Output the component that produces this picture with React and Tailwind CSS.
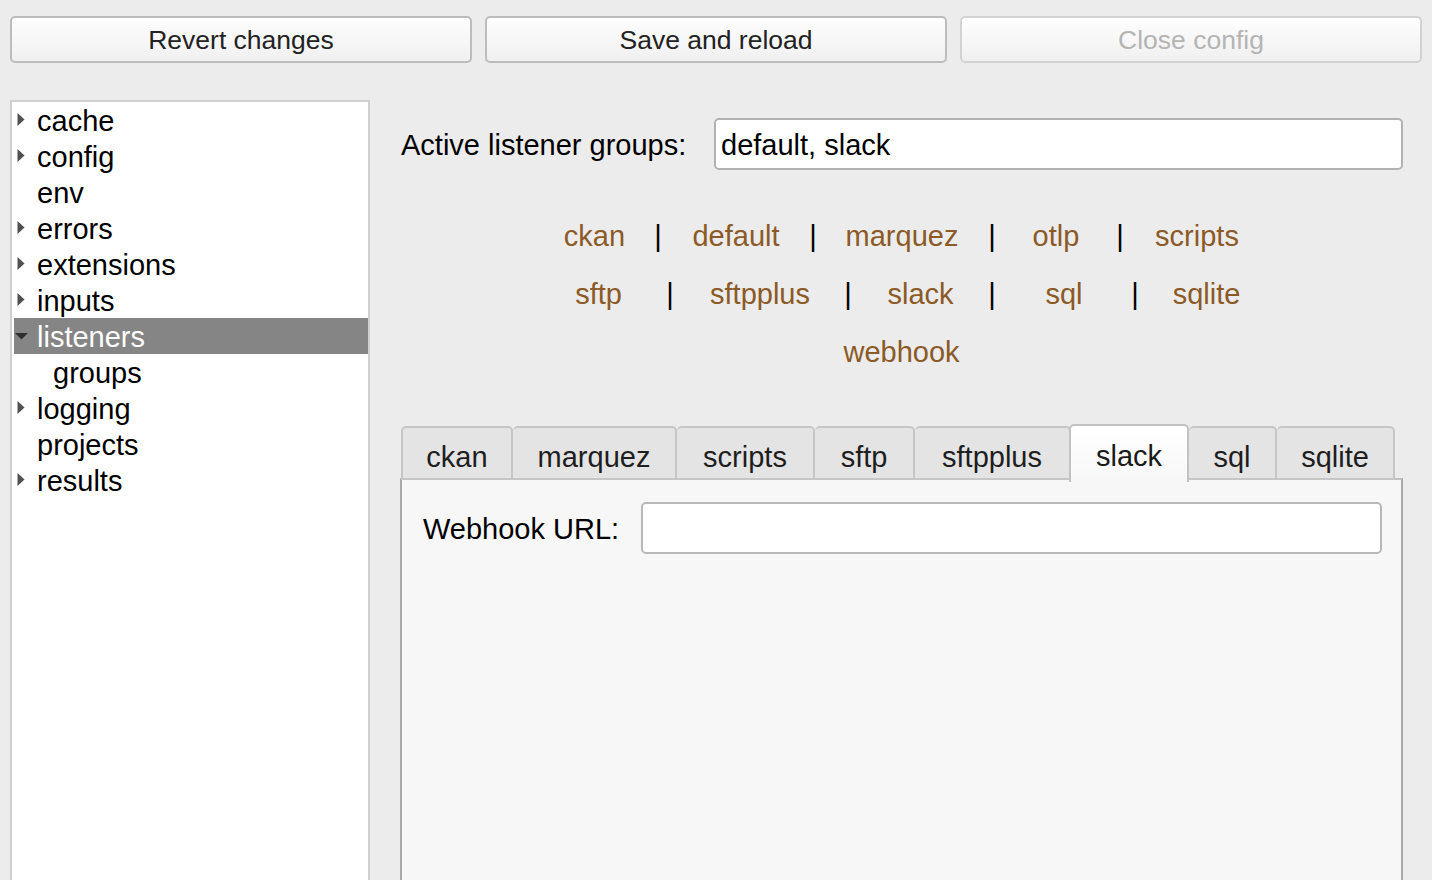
import React from "react";

const font = { fontFamily: '"Liberation Sans", Arial, Helvetica, sans-serif' };

function Btn({ children, disabled }) {
  return (
    <div
      className={`flex-1 h-[47px] flex items-center justify-center rounded-[5px] border-2 bg-gradient-to-b from-[#fefefe] to-[#f0f0f0] text-[26.5px] pt-[3px] ${
        disabled ? "border-[#d2d2d2] text-[#b4b4b4]" : "border-[#bcbcbc] text-[#222222]"
      }`}
    >
      {children}
    </div>
  );
}

const tree = [
  { t: "cache", arrow: "right" },
  { t: "config", arrow: "right" },
  { t: "env" },
  { t: "errors", arrow: "right" },
  { t: "extensions", arrow: "right" },
  { t: "inputs", arrow: "right" },
  { t: "listeners", arrow: "down", sel: true },
  { t: "groups", indent: true },
  { t: "logging", arrow: "right" },
  { t: "projects" },
  { t: "results", arrow: "right" },
];

function TreeRow({ item }) {
  return (
    <div
      className={`h-[36px] ml-[2px] flex items-center text-[29px] leading-none ${
        item.sel ? "bg-[#858585] text-white" : "text-black"
      }`}
    >
      <div className="w-[23px] h-full flex items-center shrink-0">
        {item.arrow === "right" && (
          <svg width="23" height="36" viewBox="0 0 23 36">
            <polygon points="3.5,11 10.5,17.5 3.5,24" fill="#505050" />
          </svg>
        )}
        {item.arrow === "down" && (
          <svg width="23" height="36" viewBox="0 0 23 36">
            <polygon points="1,15 14,15 7.5,21.5" fill="#2e2e2e" />
          </svg>
        )}
      </div>
      <span className={`${item.indent ? "ml-[16px]" : ""} pt-[3px]`}>{item.t}</span>
    </div>
  );
}

const row1 = [
  ["ckan", 85],
  ["|", 42],
  ["default", 114],
  ["|", 40],
  ["marquez", 138],
  ["|", 42],
  ["otlp", 86],
  ["|", 42],
  ["scripts", 112],
];
const row2 = [
  ["sftp", 93],
  ["|", 50],
  ["sftpplus", 130],
  ["|", 46],
  ["slack", 99],
  ["|", 44],
  ["sql", 100],
  ["|", 42],
  ["sqlite", 101],
];

function LinkRow({ items }) {
  return (
    <div className="h-[58px] flex items-center pl-[152px] pt-[2px]">
      {items.map(([t, w], i) => (
        <div
          key={i}
          style={{ width: w }}
          className={`text-center shrink-0 text-[29px] ${t === "|" ? "text-black" : "text-[#8b5a26]"}`}
        >
          {t}
        </div>
      ))}
    </div>
  );
}

const tabs = [
  ["ckan", 112],
  ["marquez", 164],
  ["scripts", 138],
  ["sftp", 100],
  ["sftpplus", 156],
  ["slack", 120, true],
  ["sql", 88],
  ["sqlite", 118],
];

export default function App() {
  return (
    <div style={font} className="w-[1432px] h-[880px] overflow-hidden bg-[#ececec] flex flex-col">
      <div className="flex gap-[13px] px-[10px] pt-[16px]">
        <Btn>Revert changes</Btn>
        <Btn>Save and reload</Btn>
        <Btn disabled>Close config</Btn>
      </div>
      <div className="flex mt-[37px] px-[10px] gap-[30px]">
        <div className="w-[360px] h-[800px] shrink-0 bg-white border-2 border-[#d0d0d0]">
          {tree.map((it) => (
            <TreeRow key={it.t} item={it} />
          ))}
        </div>
        <div className="w-[1003px] shrink-0 flex flex-col">
          <div className="flex items-center mt-[18px] h-[52px]">
            <div className="text-[29px] text-black w-[314px] pl-[1px] pt-[3px]">Active listener groups:</div>
            <div className="flex-1 h-[52px] bg-white border-2 border-[#b2b2b2] rounded-[5px] flex items-center px-[5px] pt-[3px] text-[29px] text-black">
              default, slack
            </div>
          </div>
          <div className="mt-[37px]">
            <LinkRow items={row1} />
            <LinkRow items={row2} />
            <div className="h-[58px] flex items-center justify-center pt-[2px] text-[29px] text-[#8b5a26]">webhook</div>
          </div>
          <div className="mt-[43px] flex items-end pl-[1px] h-[56px] relative z-10">
            {tabs.map(([t, w, sel], i) => (
              <div
                key={t}
                style={{ width: w }}
                className={`shrink-0 flex justify-center border-t-2 border-r-2 rounded-t-[5px] text-[29px] ${
                  i === 0 ? "border-l-2" : ""
                } ${
                  sel
                    ? "h-[58px] -mb-[2px] border-l-2 -ml-[2px] border-[#c2c2c2] bg-gradient-to-b from-white to-[#f7f7f7] items-start pt-[9px] text-[#1a1a1a]"
                    : "h-[54px] border-b-2 border-[#c6c6c6] bg-[#e4e4e4] items-center pt-[9px] text-[#1e1e1e]"
                }`}
              >
                {t}
              </div>
            ))}
          </div>
          <div className="h-[500px] -mt-[2px] bg-[#f7f7f7] border-2 border-[#a9a9a9] border-t-[#c0c0c0]">
            <div className="flex items-center mt-[22px] h-[52px] pl-[21px] pr-[19px]">
              <div className="text-[29px] text-black w-[218px] pt-[3px]">Webhook URL:</div>
              <div className="flex-1 h-[52px] bg-white border-2 border-[#b8b8b8] rounded-[5px]"></div>
            </div>
          </div>
        </div>
      </div>
    </div>
  );
}
